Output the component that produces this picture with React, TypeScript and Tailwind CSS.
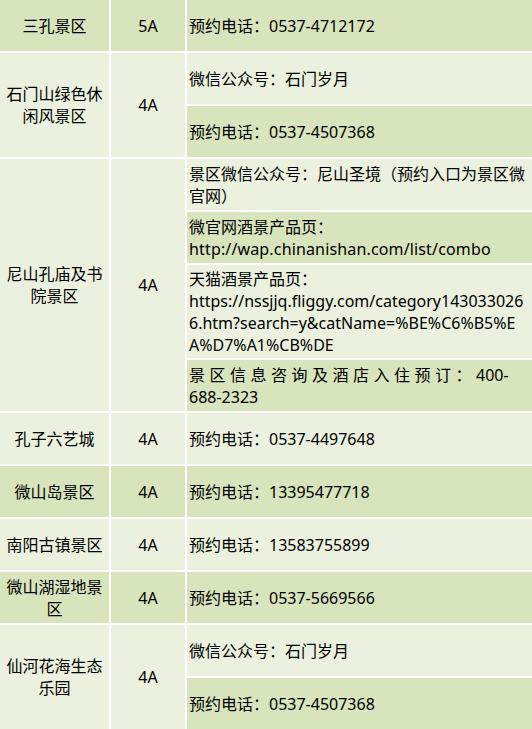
const DARK = "bg-[#d8e4bc]";
const LIGHT = "bg-[#ebf1de]";

type Sub = { text: React.ReactNode; dark: boolean };
type Row = { name: string; level: string; dark: boolean; subs: Sub[] };

const rows: Row[] = [
  { name: "三孔景区", level: "5A", dark: true, subs: [{ text: "预约电话：0537-4712172", dark: true }] },
  {
    name: "石门山绿色休闲风景区",
    level: "4A",
    dark: false,
    subs: [
      { text: "微信公众号：石门岁月", dark: false },
      { text: "预约电话：0537-4507368", dark: true },
    ],
  },
  {
    name: "尼山孔庙及书院景区",
    level: "4A",
    dark: false,
    subs: [
      { text: "景区微信公众号：尼山圣境（预约入口为景区微官网）", dark: false },
      {
        text: (
          <>
            <span className="block">微官网酒景产品页：</span>
            <span className="block tracking-[0.15px]">http://wap.chinanishan.com/list/combo</span>
          </>
        ),
        dark: true,
      },
      {
        text: (
          <>
            <span className="block">天猫酒景产品页：</span>
            <span className="block">https://nssjjq.fliggy.com/category143033026</span>
            <span className="block">6.htm?search=y&amp;catName=%BE%C6%B5%E</span>
            <span className="block">A%D7%A1%CB%DE</span>
          </>
        ),
        dark: false,
      },
      {
        text: (
          <>
            <span className="block whitespace-nowrap">
              <span className="tracking-[4.5px]">景区信息咨询及酒店入住预订：</span>
              400-
            </span>
            <span className="block">688-2323</span>
          </>
        ),
        dark: true,
      },
    ],
  },
  { name: "孔子六艺城", level: "4A", dark: false, subs: [{ text: "预约电话：0537-4497648", dark: false }] },
  { name: "微山岛景区", level: "4A", dark: true, subs: [{ text: "预约电话：13395477718", dark: true }] },
  { name: "南阳古镇景区", level: "4A", dark: false, subs: [{ text: "预约电话：13583755899", dark: false }] },
  { name: "微山湖湿地景区", level: "4A", dark: true, subs: [{ text: "预约电话：0537-5669566", dark: true }] },
  {
    name: "仙河花海生态乐园",
    level: "4A",
    dark: false,
    subs: [
      { text: "微信公众号：石门岁月", dark: false },
      { text: "预约电话：0537-4507368", dark: true },
    ],
  },
];

const spanClass: Record<number, string> = {
  1: "row-span-1",
  2: "row-span-2",
  4: "row-span-4",
};

export default function App() {
  return (
    <div
      className="grid w-[532px] grid-cols-[109px_74px_1fr] grid-rows-[51px_51px_51px_51px_51px_93px_51px_51px_51px_51px_51px_51px_51px] gap-[2px] overflow-hidden bg-white text-[16px] leading-[22px] text-black"
      style={{ fontFamily: '"Noto Sans", "Noto Sans CJK SC", sans-serif' }}
    >
      {rows.map((row) => [
        <div
          key={row.name + "-n"}
          className={`${spanClass[row.subs.length]} ${row.dark ? DARK : LIGHT} col-start-1 flex items-center justify-center px-[3px] text-center`}
        >
          {row.name}
        </div>,
        <div
          key={row.name + "-l"}
          className={`${spanClass[row.subs.length]} ${row.dark ? DARK : LIGHT} col-start-2 flex items-center justify-center`}
        >
          {row.level}
        </div>,
        ...row.subs.map((sub, i) => (
          <div
            key={row.name + "-s" + i}
            className={`${sub.dark ? DARK : LIGHT} col-start-3 flex items-center pl-[2px] pr-[6px]`}
          >
            <div className="w-full break-all">{sub.text}</div>
          </div>
        )),
      ])}
    </div>
  );
}
